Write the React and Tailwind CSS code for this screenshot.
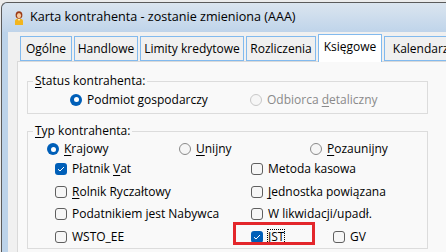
import React from 'react';

const Radio = ({ checked, disabled, children }) => (
    <div className={`flex items-center gap-[5px] ${disabled ? 'text-[#8a8a8a]' : 'text-black'}`}>
        {checked ? (
            <span className="w-[12px] h-[12px] rounded-full bg-[#005fb8] flex items-center justify-center shrink-0">
                <span className="w-[5px] h-[5px] rounded-full bg-white" />
            </span>
        ) : (
            <span className={`w-[12px] h-[12px] rounded-full border shrink-0 ${disabled ? 'border-[#c8c8c8] bg-[#f6f6f6]' : 'border-[#8a8a8a] bg-[#f6f6f6]'}`} />
        )}
        <span>{children}</span>
    </div>
);

const Check = ({ checked, focus, children }) => (
    <div className="flex items-center gap-[5px] text-black">
        {checked ? (
            <span className="w-[12px] h-[12px] rounded-[3px] bg-[#005fb8] flex items-center justify-center shrink-0">
                <svg width="8" height="6" viewBox="0 0 8 6" fill="none">
                    <path d="M1 3.2 L3 5 L7 1" stroke="white" strokeWidth="1" />
                </svg>
            </span>
        ) : (
            <span className="w-[12px] h-[12px] rounded-[3px] border border-[#5f5f5f] bg-[#f6f6f6] shrink-0" />
        )}
        <span className={focus ? 'outline outline-1 outline-dotted outline-black leading-[13px]' : ''}>{children}</span>
    </div>
);

// podkreślenie litery skrótu
const U = ({ children }) => <span className="underline decoration-1 underline-offset-[2px]">{children}</span>;

const tabs = [
    { label: 'Ogólne', w: 'w-[52px]' },
    { label: 'Handlowe', w: 'w-[64px]' },
    { label: 'Limity kredytowe', w: 'w-[104px]' },
    { label: 'Rozliczenia', w: 'w-[70px]' },
    { label: 'Księgowe', w: 'w-[64px]', active: true },
    { label: 'Kalendarze', w: 'w-[80px]' },
];

const PersonIcon = () => (
    <svg width="10" height="14" viewBox="0 0 10 14">
        <path d="M1 14 L1 10 Q1 7.5 5 7.5 Q9 7.5 9 10 L9 14 Z" fill="#f2b51d" />
        <path d="M3.5 7.6 L5 10 L6.5 7.6 Z" fill="#fff3c8" />
        <ellipse cx="5" cy="4" rx="3.4" ry="3.8" fill="#9b3b16" />
        <ellipse cx="5" cy="4.6" rx="2.1" ry="2.6" fill="#f6caa0" />
    </svg>
);

export default function App() {
    return (
        <div className="relative w-[446px] h-[252px] overflow-hidden bg-[#ececec] font-['Open_Sans',sans-serif] text-[12px]">
            <div className="mt-[2px] ml-[1px] h-[250px] border-t border-l border-[#5b5b5b] rounded-tl-[6px] bg-[#bcd3ea] flex flex-col">
                {/* pasek tytułu */}
                <div className="h-[29px] shrink-0 bg-gradient-to-b from-[#dbe5ef] to-[#bfd4ea] rounded-tl-[6px] flex items-center pl-[12px] gap-[6px]">
                    <PersonIcon />
                    <span className="text-[12.6px] text-black">Karta kontrahenta - zostanie zmieniona (AAA)</span>
                </div>

                <div className="ml-[6px] flex-1 bg-[#f0f0f0] pt-[2px] pl-[9px]">
                    {/* zakładki */}
                    <div className="flex items-end gap-[2px] pl-[3px] h-[27px] relative z-10">
                        {tabs.map(t => (
                            <div
                                key={t.label}
                                className={`${t.w} shrink-0 flex justify-center whitespace-nowrap border border-[#82baee] text-black ${
                                    t.active
                                        ? 'h-[28px] -mb-[1px] bg-white border-b-0 items-start pt-[3px]'
                                        : 'h-[25px] bg-[#f0f0f0] items-center pt-[1px]'
                                }`}
                            >
                                {t.label}
                            </div>
                        ))}
                    </div>

                    {/* strona zakładki */}
                    <div className="w-[440px] h-[200px] border border-[#d9d9d9] bg-[#f9f9f9] pt-[10px] pl-[9px]">
                        <fieldset className="w-[401px] border border-[#dcdcdc]">
                            <legend className="ml-[5px] px-[2px]"><U>S</U>tatus kontrahenta:</legend>
                            <div className="h-[20px] flex items-center pl-[42px] pb-[1px]">
                                <div className="w-[180px]"><Radio checked>Podmiot <U>g</U>ospodarczy</Radio></div>
                                <Radio disabled>Odbiorca <U>d</U>etaliczny</Radio>
                            </div>
                            <div className="h-[3px]" />
                        </fieldset>

                        <fieldset className="w-[401px] mt-[8px] border border-[#dcdcdc]">
                            <legend className="ml-[5px] px-[2px]"><U>T</U>yp kontrahenta:</legend>
                            <div className="h-[18px] flex items-center pl-[19px]">
                                <div className="w-[132px]"><Radio checked><U>K</U>rajowy</Radio></div>
                                <div className="w-[131px]"><Radio><U>U</U>nijny</Radio></div>
                                <Radio><U>P</U>ozaunijny</Radio>
                            </div>
                            <div className="h-[22.5px] flex items-center pl-[27px]">
                                <div className="w-[196px]"><Check checked>Płatnik <U>V</U>at</Check></div>
                                <Check>Metoda kasowa</Check>
                            </div>
                            <div className="h-[22.5px] flex items-center pl-[27px]">
                                <div className="w-[196px]"><Check><U>R</U>olnik Ryczałtowy</Check></div>
                                <Check><U>J</U>ednostka powiązana</Check>
                            </div>
                            <div className="h-[22.5px] flex items-center pl-[27px]">
                                <div className="w-[196px]"><Check>Podatnikiem jest Nabywca</Check></div>
                                <Check>W likwidacji/upadł.</Check>
                            </div>
                            <div className="h-[22.5px] flex items-center pl-[27px]">
                                <div className="w-[196px]"><Check>WSTO_EE</Check></div>
                                <div className="w-[82px]"><Check checked focus>JST</Check></div>
                                <Check>GV</Check>
                            </div>
                        </fieldset>
                    </div>
                </div>
            </div>

            {/* czerwona ramka wyróżnienia */}
            <div className="absolute left-[233px] top-[222px] w-[82px] h-[23px] border-[3px] border-[#e3262b]" />
        </div>
    );
}
